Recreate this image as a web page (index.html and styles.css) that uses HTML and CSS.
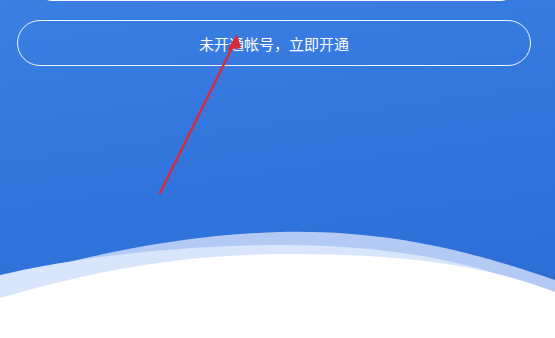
FILE: index.html
```html
<!DOCTYPE html>
<html lang="zh-CN">
<head>
<meta charset="utf-8">
<title>开通帐号</title>
<link rel="stylesheet" href="styles.css">
</head>
<body>
<div class="screen">
  <div class="top-btn"></div>
  <div class="outline-btn">未开通帐号，立即开通</div>
  <svg class="wave" viewBox="0 0 555 110" preserveAspectRatio="none" aria-hidden="true">
    <path fill="#b3cbf4" d="M0,50 C60,38 150,8 280,4 C400,1 490,30 555,52 L555,110 L0,110 Z"/>
    <path fill="#d8e5fb" d="M0,47 C60,33 150,19 270,17 C400,15 500,40 555,70 L555,110 L0,110 Z"/>
    <path fill="#ffffff" d="M0,70 C70,50 160,27 280,26 C400,25 490,38 555,64 L555,110 L0,110 Z"/>
  </svg>
  <svg class="arrow" viewBox="0 0 555 338" aria-hidden="true">
    <line x1="160" y1="193" x2="233" y2="46" stroke="#d52b3e" stroke-width="2.5" stroke-linecap="round"/>
    <polygon points="237,34 227,50 241,48" fill="#d52b3e"/>
  </svg>
</div>
</body>
</html>
```
FILE: styles.css
```css
html, body {
  margin: 0;
  padding: 0;
}
body {
  width: 555px;
  height: 338px;
  overflow: hidden;
  font-family: "Noto Sans CJK SC", "Noto Sans", sans-serif;
}
.screen {
  position: relative;
  width: 555px;
  height: 338px;
  display: flex;
  flex-direction: column;
  background: linear-gradient(172deg, #3b7fe2 0%, #3276dd 45%, #2b6cd5 100%);
  overflow: hidden;
}
.top-btn {
  height: 40px;
  margin: -39px 35px 0 33px;
  background: #ffffff;
  border-radius: 20px;
  flex: none;
}
.outline-btn {
  flex: none;
  height: 44px;
  margin: 19px 24px 0 17px;
  border: 1px solid rgba(255, 255, 255, 0.92);
  border-radius: 23px;
  display: flex;
  align-items: center;
  justify-content: center;
  color: #ffffff;
  font-size: 15px;
}
.wave {
  display: block;
  flex: none;
  width: 555px;
  height: 110px;
  margin-top: auto;
}
.arrow {
  position: absolute;
  left: 0;
  top: 0;
  width: 555px;
  height: 338px;
  pointer-events: none;
}
```
